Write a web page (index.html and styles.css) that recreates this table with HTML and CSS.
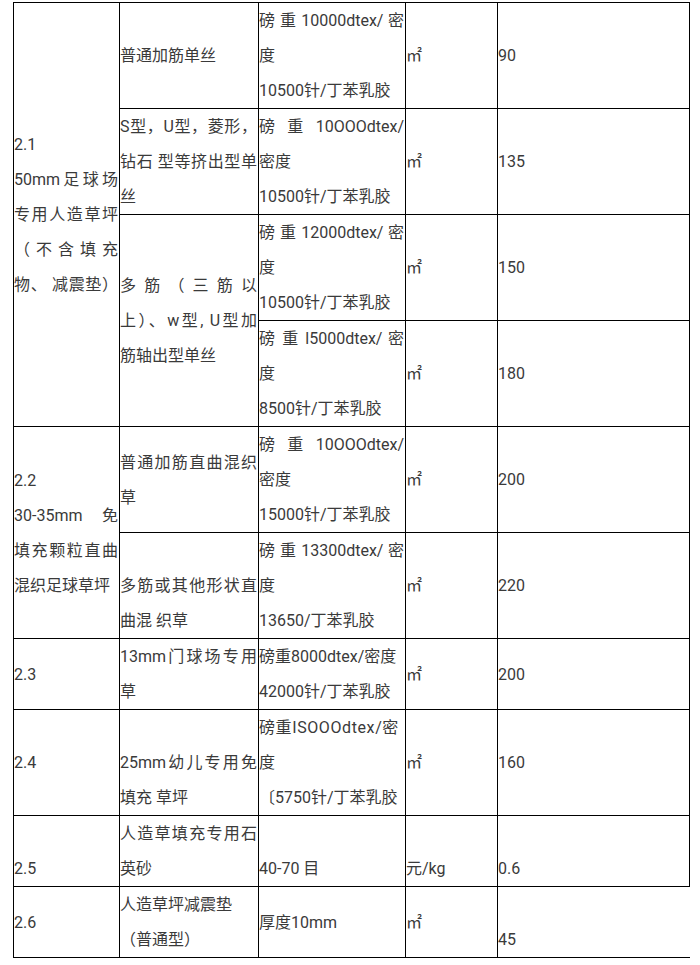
FILE: index.html
```html
<!DOCTYPE html>
<html lang="zh-CN">
<head>
<meta charset="utf-8">
<title>人造草坪价格表</title>
<link rel="stylesheet" href="styles.css">
</head>
<body>
<table class="price">
  <colgroup>
    <col class="w1"><col class="w2"><col class="w3"><col class="w4"><col class="w5">
  </colgroup>
  <tbody>
    <tr>
      <td rowspan="4">
        <div class="l">2.1</div>
        <div class="l j">50mm足球场</div>
        <div class="l j">专用人造草坪</div>
        <div class="l j">（ 不 含 填 充</div>
        <div class="l j">物、 减震垫）</div>
      </td>
      <td><div class="l">普通加筋单丝</div></td>
      <td>
        <div class="l j">磅 重 10000dtex/ 密</div>
        <div class="l">度</div>
        <div class="l">10500针/丁苯乳胶</div>
      </td>
      <td><div class="l">㎡</div></td>
      <td><div class="l">90</div></td>
    </tr>
    <tr>
      <td>
        <div class="l j">S型，U型，菱形，</div>
        <div class="l j">钻石 型等挤出型单</div>
        <div class="l">丝</div>
      </td>
      <td>
        <div class="l j">磅 重 10OOOdtex/</div>
        <div class="l">密度</div>
        <div class="l">10500针/丁苯乳胶</div>
      </td>
      <td><div class="l">㎡</div></td>
      <td><div class="l">135</div></td>
    </tr>
    <tr>
      <td rowspan="2">
        <div class="l j">多 筋 （ 三 筋 以</div>
        <div class="l j">上）、w型, U型加</div>
        <div class="l">筋轴出型单丝</div>
      </td>
      <td>
        <div class="l j">磅 重 12000dtex/ 密</div>
        <div class="l">度</div>
        <div class="l">10500针/丁苯乳胶</div>
      </td>
      <td><div class="l">㎡</div></td>
      <td><div class="l">150</div></td>
    </tr>
    <tr>
      <td>
        <div class="l j">磅 重 l5000dtex/ 密</div>
        <div class="l">度</div>
        <div class="l">8500针/丁苯乳胶</div>
      </td>
      <td><div class="l">㎡</div></td>
      <td><div class="l">180</div></td>
    </tr>
    <tr>
      <td rowspan="2">
        <div class="l">2.2</div>
        <div class="l j">30-35mm&nbsp; 免</div>
        <div class="l j">填充颗粒直曲</div>
        <div class="l">混织足球草坪</div>
      </td>
      <td>
        <div class="l j">普通加筋直曲混织</div>
        <div class="l">草</div>
      </td>
      <td>
        <div class="l j">磅 重 10OOOdtex/</div>
        <div class="l">密度</div>
        <div class="l">15000针/丁苯乳胶</div>
      </td>
      <td><div class="l">㎡</div></td>
      <td><div class="l">200</div></td>
    </tr>
    <tr>
      <td>
        <div class="l e"></div>
        <div class="l j">多筋或其他形状直</div>
        <div class="l">曲混 织草</div>
      </td>
      <td>
        <div class="l j">磅 重 13300dtex/ 密</div>
        <div class="l">度</div>
        <div class="l">13650/丁苯乳胶</div>
      </td>
      <td><div class="l">㎡</div></td>
      <td><div class="l">220</div></td>
    </tr>
    <tr>
      <td><div class="l">2.3</div></td>
      <td>
        <div class="l j">13mm门球场专用</div>
        <div class="l">草</div>
      </td>
      <td>
        <div class="l">磅重8000dtex/密度</div>
        <div class="l">42000针/丁苯乳胶</div>
      </td>
      <td><div class="l">㎡</div></td>
      <td><div class="l">200</div></td>
    </tr>
    <tr>
      <td><div class="l">2.4</div></td>
      <td>
        <div class="l e"></div>
        <div class="l j">25mm幼儿专用免</div>
        <div class="l">填充 草坪</div>
      </td>
      <td>
        <div class="l wide">磅重ISOOOdtex/密</div>
        <div class="l">度</div>
        <div class="l">〔5750针/丁苯乳胶</div>
      </td>
      <td><div class="l">㎡</div></td>
      <td><div class="l">160</div></td>
    </tr>
    <tr>
      <td>
        <div class="l e"></div>
        <div class="l">2.5</div>
      </td>
      <td>
        <div class="l j">人造草填充专用石</div>
        <div class="l">英砂</div>
      </td>
      <td>
        <div class="l e"></div>
        <div class="l">40-70 目</div>
      </td>
      <td>
        <div class="l e"></div>
        <div class="l">元/kg</div>
      </td>
      <td>
        <div class="l e"></div>
        <div class="l">0.6</div>
      </td>
    </tr>
    <tr>
      <td><div class="l">2.6</div></td>
      <td>
        <div class="l">人造草坪减震垫</div>
        <div class="l">（普通型）</div>
      </td>
      <td><div class="l">厚度10mm</div></td>
      <td><div class="l">㎡</div></td>
      <td class="open">
        <div class="l e"></div>
        <div class="l">45</div>
      </td>
    </tr>
  </tbody>
</table>
</body>
</html>
```

FILE: styles.css
```css
html, body {
  margin: 0;
  padding: 0;
  background: #ffffff;
}

body {
  font-family: Roboto, "Noto Sans CJK SC", sans-serif;
  font-size: 16px;
  color: #3a3a3a;
}

.price {
  border-collapse: separate;
  border-spacing: 0;
  table-layout: fixed;
  width: 677px;
  margin: 2px 0 0 13px;
  border-top: 1px solid #000;
  border-left: 1px solid #000;
}

.w1 { width: 106px; }
.w2 { width: 139px; }
.w3 { width: 147px; }
.w4 { width: 92px; }
.w5 { width: 192px; }

.price td {
  border-right: 1px solid #000;
  border-bottom: 1px solid #000;
  padding: 0 1px 0 0;
  vertical-align: middle;
  text-align: left;
  line-height: 35px;
}

.price td.open {
  border-right: none;
}

.l {
  display: block;
  height: 35px;
  line-height: 35px;
  text-align: left;
}

.j {
  text-align: justify;
  text-align-last: justify;
}

.wide {
  letter-spacing: 0.6px;
}

.e {
  height: 35px;
}
```
